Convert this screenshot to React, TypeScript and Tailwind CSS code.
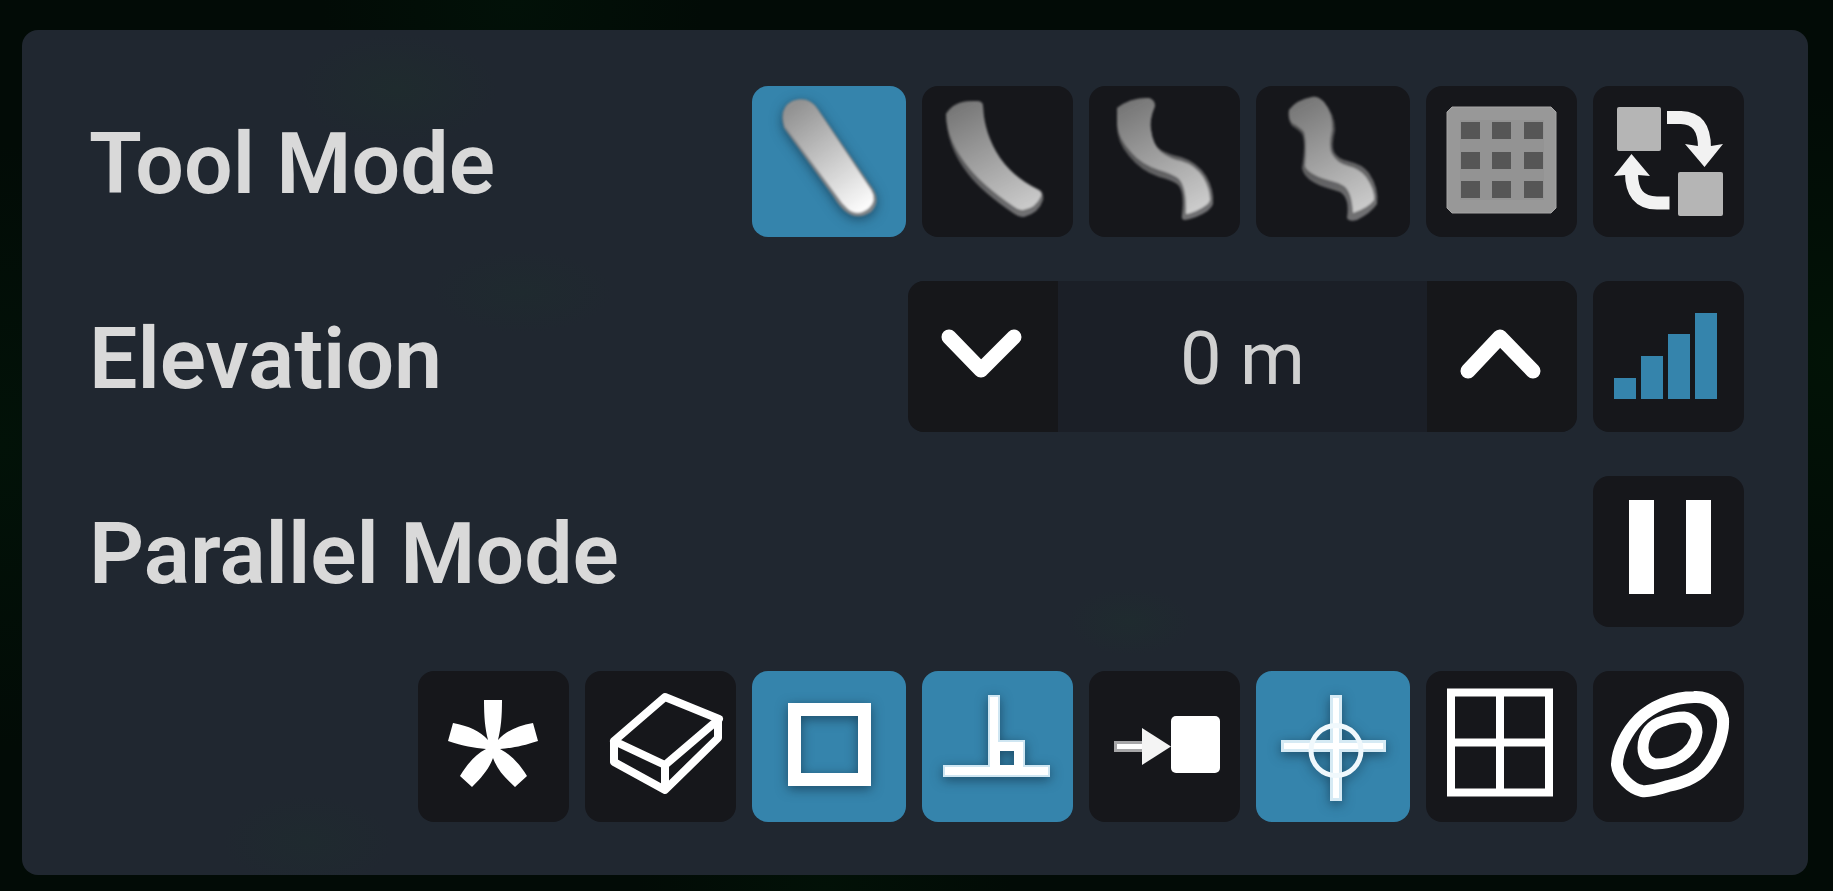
import { useState, type ReactNode } from "react";

type ToolButtonProps = {
  label: string;
  children: ReactNode;
  active?: boolean;
  wide?: boolean;
  onClick?: () => void;
};

function Icon({ children, shadow = false }: { children: ReactNode; shadow?: boolean }) {
  return (
    <svg
      viewBox="0 0 151 151"
      className={
        shadow
          ? "size-[151px] shrink-0 drop-shadow-[0_3px_6px_rgba(10,30,45,0.55)]"
          : "size-[151px] shrink-0"
      }
      fill="none"
      aria-hidden="true"
    >
      {children}
    </svg>
  );
}

function ToolButton({ label, children, active = false, wide = false, onClick }: ToolButtonProps) {
  return (
    <button
      type="button"
      aria-label={label}
      aria-pressed={active}
      onClick={onClick}
      className={`flex h-[151px] shrink-0 items-center justify-center overflow-hidden rounded-2xl ${
        wide ? "w-[154px]" : "w-[151px]"
      } ${active ? "bg-[#3584ac]" : "bg-[#16171b]"}`}
    >
      <Icon shadow={active}>{children}</Icon>
    </button>
  );
}

function Row({ label, children }: { label?: string; children: ReactNode }) {
  return (
    <div className="flex items-center justify-end gap-4">
      {label && (
        <h2 className="mt-1 mr-auto text-[86px] leading-[100px] font-semibold whitespace-nowrap text-[#d9d9d9]">
          {label}
        </h2>
      )}
      {children}
    </div>
  );
}

const CURVE =
  "M24 28Q32 14 54 15Q61 15 61 20Q62 48 78 72Q92 92 118 104Q122 107 121 114Q117 127 102 131Q96 131 91 127Q60 106 46 88Q24 60 24 28Z";
const CURVE_FACE =
  "M24 28Q32 14 54 15Q61 15 61 20Q62 48 78 72Q92 92 116 104Q120 106 119 110Q114 122 101 124Q96 124 91 120Q62 100 48 83Q25 56 24 28Z";
const S_CURVE =
  "M28 22Q42 11 60 12Q66 14 66 20Q60 34 62 44Q64 60 72 64Q81 69 92 71Q108 76 117 90Q125 103 124 118Q122 125 107 131Q99 134 95 134Q92 133 93 129Q96 104 88 98Q82 94 70 91Q52 85 40 70Q28 56 28 40Z";
const S_CURVE_FACE =
  "M28 22Q42 11 60 12Q66 14 66 20Q60 34 62 44Q64 59 72 66Q81 73 92 75Q106 79 114 91Q121 103 121 114Q120 119 107 125Q100 128 97 128Q98 102 90 93Q84 88 70 84Q52 78 42 66Q29 52 28 38Z";
const COMPLEX =
  "M31 24Q38 14 54 11Q60 10 66 16Q77 28 77 44Q73 60 76 66Q80 73 90 75Q104 78 111 87Q121 102 119 118Q113 127 99 134Q91 136 89 132Q92 112 82 106Q76 104 66 101Q46 94 44 82Q48 56 44 48Q41 44 34 40Q29 33 31 24Z";
const COMPLEX_FACE =
  "M31 24Q38 14 54 11Q60 10 66 16Q75 28 74 44Q70 60 74 68Q79 77 90 80Q102 83 108 91Q117 104 116 114Q110 122 95 127Q94 106 86 100Q79 96 70 94Q50 88 47 80Q49 56 46 46Q42 41 34 37Q30 31 31 24Z";

const GRID_COLS = [35, 66, 98];
const GRID_ROWS = [36, 66, 95];

export default function App() {
  const [mode, setMode] = useState("straight");
  const [elevation, setElevation] = useState(0);
  const [snaps, setSnaps] = useState<string[]>(["sides", "angle", "guides"]);
  const toggle = (id: string) =>
    setSnaps((s) => (s.includes(id) ? s.filter((x) => x !== id) : [...s, id]));
  const modeProps = (id: string) => ({ active: mode === id, onClick: () => setMode(id) });
  const snapProps = (id: string) => ({ active: snaps.includes(id), onClick: () => toggle(id) });

  return (
    <main className="min-h-screen bg-[#020b06] bg-[radial-gradient(circle_at_28%_0%,#021108_0,transparent_12%),radial-gradient(circle_at_0%_50%,#021208_0,transparent_16%),radial-gradient(circle_at_100%_40%,#021306_0,transparent_14%),radial-gradient(circle_at_45%_100%,#021107_0,transparent_14%)] pt-[30px] pr-[25px] pb-[16px] pl-[22px] font-[Roboto,sans-serif]">
      <svg width="0" height="0" className="absolute" aria-hidden="true">
        <defs>
          <linearGradient id="bright" x1="40" y1="20" x2="112" y2="120" gradientUnits="userSpaceOnUse">
            <stop offset="0" stopColor="#929292" />
            <stop offset="1" stopColor="#fbfbfb" />
          </linearGradient>
          <linearGradient id="face" x1="40" y1="15" x2="100" y2="128" gradientUnits="userSpaceOnUse">
            <stop offset="0" stopColor="#757575" />
            <stop offset="1" stopColor="#cccccc" />
          </linearGradient>
          <linearGradient id="edge" x1="40" y1="15" x2="100" y2="134" gradientUnits="userSpaceOnUse">
            <stop offset="0" stopColor="#4c4c4d" />
            <stop offset="1" stopColor="#717173" />
          </linearGradient>
          <filter id="soft">
            <feGaussianBlur stdDeviation="1" />
          </filter>
        </defs>
      </svg>

      <section
        aria-label="Tool options"
        className="flex flex-col gap-[44px] rounded-2xl bg-[#202730] bg-[radial-gradient(ellipse_at_21%_7%,#1f2b2e_0,transparent_5%),radial-gradient(ellipse_at_28%_31%,#1f2a2f_0,transparent_5%),radial-gradient(ellipse_at_16%_96%,#1f2a2f_0,transparent_4%),radial-gradient(ellipse_at_62%_70%,#1f2b2f_0,transparent_4%)] pt-[56px] pr-[64px] pb-[53px] pl-[67px]"
      >
        <Row label="Tool Mode">
          <ToolButton label="Straight" wide {...modeProps("straight")}>
            <g filter="url(#soft)">
              <path d="M30 42Q24 22 38 15Q55 9 64 23L119 103Q127 116 117 126Q103 135 91 125Q85 120 79 110Z" fill="#84878a" />
              <path d="M31 40Q26 22 39 15Q54 10 63 23L117 104Q123 114 115 122Q104 131 94 123Q88 118 83 110Z" fill="url(#bright)" />
            </g>
          </ToolButton>
          <ToolButton label="Simple curve" {...modeProps("curve")}>
            <g filter="url(#soft)">
              <path d={CURVE} fill="url(#edge)" />
              <path d={CURVE_FACE} fill="url(#face)" />
            </g>
          </ToolButton>
          <ToolButton label="Complex curve" {...modeProps("s-curve")}>
            <g filter="url(#soft)">
              <path d={S_CURVE} fill="url(#edge)" />
              <path d={S_CURVE_FACE} fill="url(#face)" />
            </g>
          </ToolButton>
          <ToolButton label="Continuous" wide {...modeProps("continuous")}>
            <g filter="url(#soft)">
              <path d={COMPLEX} fill="url(#edge)" />
              <path d={COMPLEX_FACE} fill="url(#face)" />
            </g>
          </ToolButton>
          <ToolButton label="Grid" {...modeProps("grid")}>
            <path d="M26 21H125L130 26V122L125 127H26L21 122V26Z" fill="#989898" stroke="#a5a5a5" strokeWidth="1" />
            <rect x="34" y="34" width="84" height="80" fill="#939393" />
            {GRID_ROWS.map((y) =>
              GRID_COLS.map((x) => <rect key={`${x}-${y}`} x={x} y={y} width="19" height="17" fill="#565656" />),
            )}
          </ToolButton>
          <ToolButton label="Replace" {...modeProps("replace")}>
            <rect x="24" y="21" width="44" height="44" rx="2" fill="#b5b5b5" />
            <rect x="85" y="86" width="45" height="44" rx="2" fill="#b5b5b5" />
            <path d="M74 31.500H88C104 32 111.500 42 111.500 62" stroke="#f2f2f2" strokeWidth="13" />
            <path d="M92 58L105 60H118L130 58L111.500 81Z" fill="#f2f2f2" />
            <path d="M76.500 117H64C46 117 38.500 106 38.500 87" stroke="#f2f2f2" strokeWidth="13" />
            <path d="M38.500 68L21 90L32 89H45L57 90Z" fill="#f2f2f2" />
          </ToolButton>
        </Row>

        <Row label="Elevation">
          <div className="flex h-[151px] w-[669px] overflow-hidden rounded-2xl bg-[#1b1f27]">
            <button
              type="button"
              aria-label="Lower elevation"
              className="flex w-[150px] shrink-0 items-center justify-center bg-[#16171a]"
              onClick={() => setElevation(elevation - 10)}
            >
              <Icon>
                <path d="M41 56L73 89L106 56" stroke="#fff" strokeWidth="15" strokeLinecap="round" strokeLinejoin="round" />
              </Icon>
            </button>
            <output className="flex flex-1 items-center justify-center pt-1 text-[74px] leading-[100px] text-[#d0d0d0]">
              {elevation} m
            </output>
            <button
              type="button"
              aria-label="Raise elevation"
              className="flex w-[150px] shrink-0 items-center justify-center bg-[#16171a]"
              onClick={() => setElevation(elevation + 10)}
            >
              <Icon>
                <path d="M41 90L73 56L106 90" stroke="#fff" strokeWidth="15" strokeLinecap="round" strokeLinejoin="round" />
              </Icon>
            </button>
          </div>
          <ToolButton label="Elevation step">
            <path d="M21 97H43V118H21ZM48 75H70V118H48ZM75 53H97V118H75ZM102 32H124V118H102Z" fill="#3584ac" />
          </ToolButton>
        </Row>

        <Row label="Parallel Mode">
          <ToolButton label="Parallel mode">
            <path d="M36 24H61V118H36ZM93 24H118V118H93Z" fill="#fff" />
          </ToolButton>
        </Row>

        <Row>
          <ToolButton label="Snap to everything" {...snapProps("all")}>
            <path
              d="M66 29H84C84 46 83 57 80 69C88 60 99 55 115 52L120 70C105 75 94 77 82 78C92 83 101 92 109 105L97 116C86 106 79 98 75 87C71 98 64 106 54 116L42 105C50 92 58 83 68 78C56 77 45 75 30 70L35 52C51 55 62 60 70 69C67 57 66 46 66 29Z"
              fill="#fff"
            />
          </ToolButton>
          <ToolButton label="Snap to surface" {...snapProps("surface")}>
            <path
              d="M80 26L134 48L80 94L29 70ZM29 70V91L80 119L133 67V48M80 94V119"
              stroke="#fff"
              strokeWidth="8"
              strokeLinejoin="round"
            />
          </ToolButton>
          <ToolButton label="Snap to sides" wide {...snapProps("sides")}>
            <rect x="40.500" y="38.500" width="70" height="70" stroke="#fff" strokeWidth="13" />
          </ToolButton>
          <ToolButton label="Snap to right angles" {...snapProps("angle")}>
            <path d="M66 24H78V69H103V94H128V106H21V94H66ZM78 80V94H92V80Z" fill="#fff" fillRule="evenodd" />
            <path d="M67 25H77V70H102V95H127V105H22V95H67Z" stroke="#cfe6f2" strokeWidth="2" />
          </ToolButton>
          <ToolButton label="Snap to nearby objects" {...snapProps("nearby")}>
            <path d="M25 70H56V81H25Z" fill="#a6a6a8" />
            <path d="M28 73H56V78H28Z" fill="#fff" />
            <path d="M53 57L82 75.500L53 94Z" fill="#f4f4f4" />
            <rect x="82" y="45" width="49" height="57" rx="5" fill="#fff" />
          </ToolButton>
          <ToolButton label="Snap to guidelines" wide {...snapProps("guides")}>
            <path d="M72 24H84V130H72ZM23 69H128V81H23Z" fill="#d6eaf4" />
            <path d="M75 27H81V127H75ZM26 72H125V78H26Z" fill="#fff" />
            <circle cx="78" cy="79.500" r="25" stroke="#f0f8fc" strokeWidth="5" />
          </ToolButton>
          <ToolButton label="Snap to zone grid" {...snapProps("zone")}>
            <path d="M25 21.500H123V121.500H25ZM74 21V122M25 71.500H123" stroke="#fff" strokeWidth="8" />
          </ToolButton>
          <ToolButton label="Contour lines" {...snapProps("contour")}>
            <path
              d="M24 94C24 80 33 61 46 48C58 36 80 26 101 26C118 25 128 36 130 48C131 62 124 84 111 98C102 108 88 112 75 115C66 118 56 121 49 120C38 118 25 105 24 94Z"
              stroke="#fff"
              strokeWidth="12"
            />
            <path
              d="M50 77C50 62 59 53 70 50C78 47 84 46 91 46C99 47 104 54 104 61C103 72 96 81 86 87C79 91 70 93 62 93C55 92 50 85 50 77Z"
              stroke="#fff"
              strokeWidth="11"
            />
          </ToolButton>
        </Row>
      </section>
    </main>
  );
}
